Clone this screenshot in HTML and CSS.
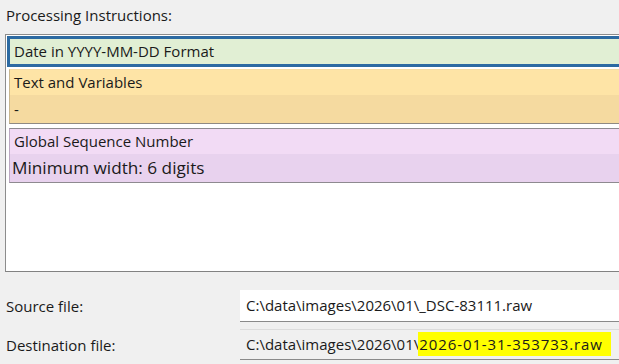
FILE: index.html
```html
<!DOCTYPE html>
<html>
<head>
<meta charset="utf-8">
<link rel="stylesheet" href="styles.css">
</head>
<body>
<div class="page">
  <div class="heading">Processing Instructions:</div>
  <div class="listbox">
    <div class="item item-green selected">
      <div class="row">Date in YYYY-MM-DD Format</div>
    </div>
    <div class="item item-orange">
      <div class="row row-top">Text and Variables</div>
      <div class="row row-bottom">-</div>
    </div>
    <div class="item item-purple">
      <div class="row row-top">Global Sequence Number</div>
      <div class="row row-bottom big">Minimum width: 6 digits</div>
    </div>
  </div>
  <div class="fields">
    <div class="field-row">
      <div class="label">Source file:</div>
      <div class="input input-white">C:\data\images\2026\01\_DSC-83111.raw</div>
    </div>
    <div class="field-row">
      <div class="label">Destination file:</div>
      <div class="input input-grey">C:\data\images\2026\01\<span class="hl">2026-01-31-353733.raw</span></div>
    </div>
  </div>
</div>
</body>
</html>
```
FILE: styles.css
```css
html, body {
  margin: 0;
  padding: 0;
  background: #f0f0f0;
  overflow: hidden;
}
.page {
  width: 619px;
  height: 364px;
  overflow: hidden;
  font-family: "Open Sans", "Noto Sans", sans-serif;
  font-size: 15px;
  color: #1a1a1a;
}
.heading {
  padding: 5px 0 0 6px;
  height: 34px;
  box-sizing: border-box;
  font-size: 15px;
  line-height: 20px;
}
.listbox {
  margin-left: 5px;
  width: 700px;
  height: 238px;
  box-sizing: border-box;
  background: #ffffff;
  border: 1px solid #8c8c8c;
  border-bottom-color: #828282;
  padding: 1px 0 0 1px;
}
.item {
  margin-left: 2px;
  box-sizing: border-box;
}
.row {
  height: 26px;
  line-height: 26px;
  padding-left: 4px;
  white-space: nowrap;
}
.row-bottom {
  height: 28px;
  line-height: 28px;
}
.selected {
  margin-left: 0;
  border: 3px solid #2c6aa2;
  background: #e1efd4;
}
.selected .row {
  height: 25px;
  line-height: 25px;
  padding-left: 4px;
}
.item-orange {
  margin-top: 2px;
  border-top: 1px solid #f4dca8;
  border-bottom: 1px solid #8f8a84;
  border-left: 1px solid #c8b68e;
}
.item-orange .row-top { background: #fee4a6; height: 25px; line-height: 25px; }
.item-orange .row-bottom { background: #f5daa0; }
.item-purple {
  margin-top: 4px;
  border-top: 1px solid #8e8a90;
  border-bottom: 1px solid #8e8a90;
  border-left: 1px solid #bca8c2;
}
.item-purple .row-top { background: #f2dbf5; height: 25px; line-height: 25px; }
.item-purple .row-bottom { background: #e8d2ee; }
.big {
  font-size: 17.2px;
  padding-left: 2px;
}
.fields {
  padding-top: 18px;
  display: flex;
  flex-direction: column;
  gap: 7px;
}
.field-row {
  display: flex;
  align-items: center;
}
.label {
  width: 234px;
  padding-left: 6px;
  font-size: 15px;
}
.input {
  flex: 1;
  height: 32px;
  line-height: 31px;
  box-sizing: border-box;
  padding-left: 6px;
  font-size: 15px;
  white-space: nowrap;
}
.input-white {
  background: #ffffff;
  border-bottom: 1px solid #8a8a8a;
}
.input-grey {
  height: 31px;
  line-height: 29px;
  background: #f0f0f0;
  border-top: 1px solid #dcdcdc;
  border-bottom: 1px solid #8a8a8a;
}
.hl {
  background: #ffff00;
  letter-spacing: 0.9px;
  padding: 2px 8px 2px 1px;
  margin-left: -1px;
}
```
